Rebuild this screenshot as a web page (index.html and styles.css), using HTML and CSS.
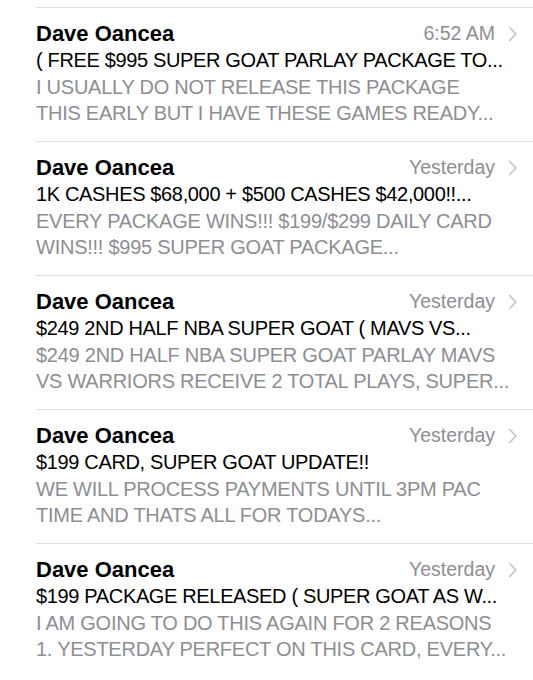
FILE: index.html
```html
<!DOCTYPE html>
<html>
<head>
<meta charset="utf-8">
<link rel="stylesheet" href="styles.css">
</head>
<body>
<div class="list">
  <div class="row">
    <div class="head"><span class="name">Dave Oancea</span><span class="date">6:52 AM</span><svg class="chev" viewBox="0 0 9 16"><path d="M1.2 1 L7.8 8 L1.2 15" /></svg></div>
    <div class="subject">( FREE $995 SUPER GOAT PARLAY PACKAGE TO...</div>
    <div class="preview">I USUALLY DO NOT RELEASE THIS PACKAGE<br>THIS EARLY BUT I HAVE THESE GAMES READY...</div>
  </div>
  <div class="row">
    <div class="head"><span class="name">Dave Oancea</span><span class="date">Yesterday</span><svg class="chev" viewBox="0 0 9 16"><path d="M1.2 1 L7.8 8 L1.2 15" /></svg></div>
    <div class="subject">1K CASHES $68,000 + $500 CASHES $42,000!!...</div>
    <div class="preview">EVERY PACKAGE WINS!!! $199/$299 DAILY CARD<br>WINS!!! $995 SUPER GOAT PACKAGE...</div>
  </div>
  <div class="row">
    <div class="head"><span class="name">Dave Oancea</span><span class="date">Yesterday</span><svg class="chev" viewBox="0 0 9 16"><path d="M1.2 1 L7.8 8 L1.2 15" /></svg></div>
    <div class="subject">$249 2ND HALF NBA SUPER GOAT ( MAVS VS...</div>
    <div class="preview">$249 2ND HALF NBA SUPER GOAT PARLAY MAVS<br>VS WARRIORS RECEIVE 2 TOTAL PLAYS, SUPER...</div>
  </div>
  <div class="row">
    <div class="head"><span class="name">Dave Oancea</span><span class="date">Yesterday</span><svg class="chev" viewBox="0 0 9 16"><path d="M1.2 1 L7.8 8 L1.2 15" /></svg></div>
    <div class="subject">$199 CARD, SUPER GOAT UPDATE!!</div>
    <div class="preview">WE WILL PROCESS PAYMENTS UNTIL 3PM PAC<br>TIME AND THATS ALL FOR TODAYS...</div>
  </div>
  <div class="row">
    <div class="head"><span class="name">Dave Oancea</span><span class="date">Yesterday</span><svg class="chev" viewBox="0 0 9 16"><path d="M1.2 1 L7.8 8 L1.2 15" /></svg></div>
    <div class="subject">$199 PACKAGE RELEASED ( SUPER GOAT AS W...</div>
    <div class="preview">I AM GOING TO DO THIS AGAIN FOR 2 REASONS<br>1. YESTERDAY PERFECT ON THIS CARD, EVERY...</div>
  </div>
</div>
</body>
</html>
```

FILE: styles.css
```css
html, body {
  margin: 0;
  padding: 0;
  background: #ffffff;
}
body {
  font-family: "Liberation Sans", Arial, sans-serif;
  color: #000;
}
.list {
  padding-top: 7px;
  margin-left: 36px;
}
.row {
  border-top: 1px solid #e0e0e2;
  height: 134px;
  padding-right: 16px;
  padding-top: 12px;
  box-sizing: border-box;
}
.head {
  display: flex;
  align-items: center;
  height: 27px;
}
.name {
  font-size: 22px;
  font-weight: bold;
  flex: 1;
}
.date {
  font-size: 19.5px;
  color: #8e8e93;
}
.chev {
  width: 9px;
  height: 16px;
  margin-left: 13px;
}
.chev path {
  fill: none;
  stroke: #c7c7cc;
  stroke-width: 1.7;
}
.subject {
  font-size: 20px;
  line-height: 27px;
  letter-spacing: -0.35px;
  white-space: nowrap;
}
.preview {
  font-size: 20px;
  line-height: 26px;
  letter-spacing: -0.25px;
  color: #8e8e93;
  white-space: nowrap;
}
```
